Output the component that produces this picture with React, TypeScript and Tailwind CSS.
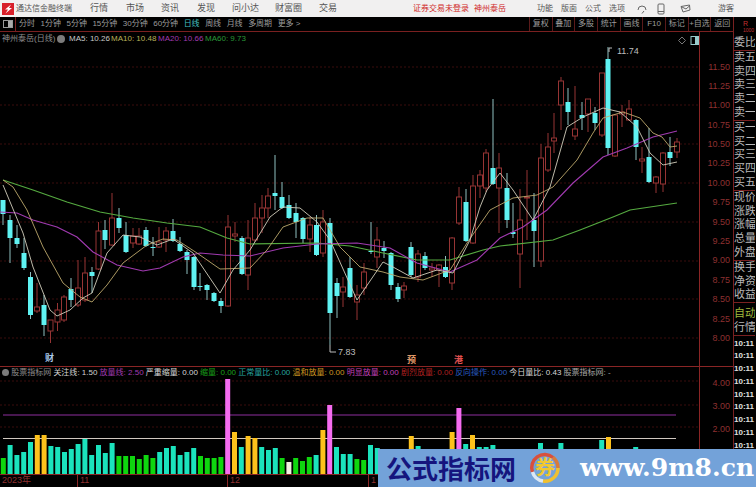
const candles: [number, number, number, number, number, string][] = [
  [3, 200, 200, 214, 225, "c"], [10, 215, 220, 238, 263, "c"], [17, 225, 238, 244, 248, "c"], [24, 238, 253, 268, 270, "c"],
  [30.5, 272, 277, 315, 319, "c"], [37, 283, 307, 311, 313, "r"], [44, 295, 305, 325, 336, "c"], [50.5, 320, 320, 331, 343, "r"],
  [57.5, 303, 310, 322, 331, "r"], [64, 295, 297, 320, 322, "r"], [71, 278, 289, 300, 307, "c"], [78, 260, 288, 305, 307, "r"],
  [85, 257, 273, 300, 302, "r"], [92, 267, 272, 276, 293, "c"], [98.5, 222, 231, 269, 270, "r"], [105, 220, 230, 240, 249, "c"],
  [112, 193, 218, 245, 246, "r"], [119, 208, 218, 228, 233, "c"], [126, 222, 235, 252, 253, "c"], [133, 228, 236, 243, 248, "r"],
  [139, 228, 236, 244, 245, "r"], [146, 227, 230, 246, 247, "c"], [153, 237, 247, 248, 256, "c"], [159, 227, 242, 247, 248, "r"],
  [166, 227, 231, 240, 252, "r"], [173, 219, 231, 241, 242, "c"], [180, 237, 244, 251, 252, "c"], [187, 250, 252, 260, 274, "c"],
  [194, 256, 257, 287, 290, "c"], [200, 273, 286, 287, 291, "c"], [207, 284, 285, 290, 300, "c"], [214, 292, 293, 301, 302, "c"],
  [221, 298, 301, 306, 313, "c"], [228, 215, 227, 306, 307, "r"], [235, 222, 234, 236, 242, "r"], [242, 236, 238, 274, 275, "c"],
  [248, 220, 238, 275, 290, "r"], [255, 203, 218, 240, 242, "r"], [262, 195, 208, 218, 233, "r"], [268, 188, 196, 208, 218, "r"],
  [275, 155, 193, 196, 210, "c"], [282, 182, 197, 208, 209, "c"], [289, 195, 205, 218, 219, "c"], [296, 203, 213, 222, 238, "c"],
  [303, 217, 218, 239, 243, "c"], [310, 217, 225, 239, 252, "r"], [316.5, 215, 225, 255, 256, "c"], [323, 210, 222, 253, 257, "r"],
  [330, 218, 223, 313, 345, "c"], [337, 278, 283, 296, 318, "c"], [343, 277, 287, 292, 307, "r"], [350, 257, 268, 297, 298, "c"],
  [357, 285, 295, 302, 320, "r"], [364, 263, 272, 288, 295, "r"], [371, 222, 251, 252, 254, "c"], [377, 227, 240, 257, 268, "r"],
  [384, 241, 248, 251, 258, "c"], [391, 252, 253, 285, 290, "c"], [398, 283, 287, 299, 302, "c"], [404, 282, 286, 290, 298, "r"],
  [411, 242, 247, 275, 277, "c"], [418, 250, 254, 277, 282, "r"], [425, 252, 256, 268, 270, "c"], [432, 263, 268, 270, 277, "r"],
  [439, 264, 265, 270, 287, "r"], [445.5, 256, 267, 277, 278, "c"], [452, 237, 238, 283, 290, "r"], [459, 187, 197, 223, 225, "r"],
  [466, 189, 202, 241, 242, "c"], [473, 175, 186, 243, 244, "r"], [480, 170, 175, 186, 198, "r"], [486, 149, 153, 188, 192, "r"],
  [493, 99, 168, 184, 185, "c"], [499, 153, 168, 188, 233, "r"], [507, 173, 188, 220, 228, "c"], [513, 203, 232, 234, 238, "c"],
  [520, 189, 220, 254, 288, "r"], [527, 170, 197, 198, 240, "r"], [534, 193, 220, 231, 267, "c"], [541, 144, 158, 261, 267, "r"],
  [548, 133, 147, 170, 172, "r"], [554, 113, 138, 141, 153, "r"], [561, 77, 81, 105, 130, "r"], [568, 88, 102, 112, 125, "c"],
  [575, 86, 129, 136, 140, "r"], [582, 102, 115, 118, 130, "c"], [588, 99, 99, 114, 132, "r"], [595, 107, 113, 123, 130, "c"],
  [602, 73, 73, 135, 137, "r"], [608, 47, 59, 148, 155, "c"], [615, 114, 115, 156, 157, "r"], [622, 105, 112, 114, 127, "r"],
  [629, 100, 109, 120, 121, "r"], [636, 119, 120, 147, 160, "c"], [642, 147, 159, 161, 173, "r"], [649, 128, 157, 182, 183, "c"],
  [656, 176, 177, 183, 193, "r"], [663, 152, 153, 184, 192, "r"], [670, 137, 152, 158, 166, "c"], [677, 138, 142, 152, 158, "r"],
]

const ma5 = "3,185 23,233 33,267 50,310 57,316 70,310 83,298 92,293 107,253 123,235 140,237 157,245 173,239 193,253 220,293 233,270 250,250 270,217 283,207 300,208 317,222 330,240 357,300 383,262 393,267 413,278 437,270 453,273 470,240 480,207 487,190 500,173 513,190 533,220 550,187 567,127 583,117 603,108 620,112 637,127 650,153 663,165 677,162"
const ma10 = "3,180 13,187 27,210 43,247 63,283 80,297 92,302 107,285 123,263 147,245 163,239 177,240 197,253 220,269 250,268 267,250 283,227 307,218 323,218 340,247 360,267 383,272 400,277 423,280 450,270 467,243 490,210 513,198 537,195 553,187 577,160 593,133 603,118 623,112 640,118 653,133 662,137 670,147 677,146"
const ma20 = "0,212 17,213 33,220 57,227 77,237 93,252 117,265 143,271 160,268 183,257 200,253 223,255 250,256 283,248 317,244 357,243 390,248 417,263 450,272 477,260 500,238 523,227 547,210 573,183 603,157 627,148 653,137 677,131"
const ma60 = "3,180 33,190 67,202 100,212 133,218 167,223 200,227 227,238 250,244 317,243 350,246 383,253 417,260 450,260 483,250 500,246 553,240 580,230 613,217 630,210 677,203"

const barColors: Record<string, string> = { g: "#0fd60f", t: "#1be3bd", y: "#fdc21c", m: "#f56cf0", w: "#f2f2e0" }
const bars: [string, number][] = [
  ["g", 16], ["t", 29], ["t", 19], ["t", 22], ["t", 32], ["y", 39], ["y", 39], ["t", 28], ["t", 27], ["t", 22], ["t", 25], ["t", 30], ["t", 35], ["t", 19],
  ["t", 29], ["t", 21], ["t", 31], ["g", 18], ["g", 18], ["g", 18], ["g", 15], ["g", 19], ["g", 16], ["t", 22], ["t", 26], ["t", 28], ["t", 19], ["t", 22],
  ["t", 26], ["g", 18], ["g", 16], ["g", 16], ["g", 17], ["m", 95], ["y", 42], ["t", 27], ["y", 38], ["y", 36], ["t", 27], ["t", 24], ["t", 26], ["g", 16],
  ["w", 12], ["g", 16], ["g", 13], ["g", 17], ["t", 19], ["y", 44], ["m", 69], ["t", 27], ["t", 20], ["t", 20], ["g", 15], ["g", 14], ["t", 29], ["t", 26],
]
const lateBars: [number, string, number][] = [
  [60, "y", 38], [61, "t", 28], [66, "y", 42], [67, "m", 66], [68, "t", 30], [69, "y", 39], [70, "t", 27], [71, "t", 27], [72, "t", 29],
  [79, "t", 31], [82, "t", 31], [88, "t", 34], [89, "y", 37], [93, "t", 27],
]

const menus = [["行情", "ml-[19px]"], ["市场", "ml-[18px]"], ["资讯", "ml-[17px]"], ["发现", "ml-[18px]"], ["问小达", "ml-[17px]"], ["财富圈", "ml-[16px]"], ["交易", "ml-[17px]"]]
const periods = ["分时", "1分钟", "5分钟", "15分钟", "30分钟", "60分钟", "日线", "周线", "月线", "多周期", "更多 >"]
const tools = ["复权", "叠加", "多股", "统计", "画线", "F10", "标记", "+自选", "返回"]
const prices = ["11.50", "11.25", "11.00", "10.75", "10.50", "10.25", "10.00", "9.75", "9.50", "9.25", "9.00", "8.75", "8.50", "8.25", "8.00"]
const quoteGroups = [["委比"], ["卖五", "卖四", "卖三", "卖二", "卖一"], ["买一", "买二", "买三", "买四", "买五"], ["现价", "涨跌", "涨幅", "总量", "外盘"], ["换手", "净资", "收益"]]
const indicators = [
  ["关注线", "1.50", "text-[#d0d0d0]"], ["放量线", "2.50", "text-[#a03ab0]"], ["严重缩量", "0.00", "text-[#d8d8d8]"], ["缩量", "0.00", "text-[#19a019]"],
  ["正常量比", "0.00", "text-[#25a5a0]"], ["温和放量", "0.00", "text-[#d09820]"], ["明显放量", "0.00", "text-[#c040b8]"], ["剧烈放量", "0.00", "text-[#b02020]"],
  ["反向操作", "0.00", "text-[#2a5cc0]"], ["今日量比", "0.43", "text-[#d8d8d8]"], ["股票指标网", "-", "text-[#a8a8a8]"],
]

const App = () => {
  return (
    <div className="relative w-[756px] h-[487px] overflow-hidden bg-black flex flex-col font-['Liberation_Sans','Noto_Sans_CJK_SC',sans-serif]">

      {/* title bar */}
      <div className="h-[17px] shrink-0 bg-[#f1f0f0] flex items-center text-[#555] whitespace-nowrap">
        <svg width="12" height="12" viewBox="0 0 12 12" className="ml-[2px]">
          <rect width="12" height="12" fill="#d8202a" />
          <path d="M9 1.500 3 6.500h3L3.500 10.500 10 5H7z" fill="#fff" />
        </svg>
        <span className="ml-[2px] text-[8px] w-[55px]">通达信金融终端</span>
        {menus.map(([m, c]) => (
          <span key={m} className={`${c} text-[9px]`}>{m}</span>
        ))}
        <span className="ml-[76px] text-[8px] text-[#d02a2a]">证券交易未登录</span>
        <span className="ml-[5px] text-[8px] text-[#d02a2a]">神州泰岳</span>
        <span className="ml-[31px] text-[8px]">功能</span>
        <span className="ml-[8px] text-[8px]">版面</span>
        <span className="ml-[8px] text-[8px]">公式</span>
        <span className="ml-[8px] text-[8px]">选项</span>
        <svg width="10" height="10" viewBox="0 0 10 10" fill="none" stroke="#666" className="ml-[12px]">
          <path d="M1 6a4 4 0 1 1 8 0M5 9.500 7 7" />
        </svg>
        <svg width="8" height="12" viewBox="0 0 8 12" fill="none" stroke="#666" className="ml-[10px]">
          <rect x="1" y="1" width="6" height="10" rx="1" />
          <path d="M1 8.500h6" />
        </svg>
        <svg width="11" height="9" viewBox="0 0 11 9" fill="none" stroke="#666" className="ml-[15px]">
          <path d="M1 2.500 9.500 1l.5 5-7 2-2-5.500 5 2.500 4-3.500" />
        </svg>
        <span className="ml-[27px] text-[8px]">游客</span>
      </div>

      <div className="flex flex-1 min-h-0">
        <div className="w-[734px] shrink-0 flex flex-col border-r border-[#7a2020]">

          {/* period + tool bar */}
          <div className="h-[15px] shrink-0 flex items-center border-b border-[#7a2020] text-[8px] text-[#9c9c9c] whitespace-nowrap">
            <div className="w-[16px] h-full flex items-center justify-center border-r border-[#7a2020]">
              <div className="w-[10px] h-[8px] border border-[#999] flex justify-end"><div className="w-[4px] bg-[#aaa]" /></div>
            </div>
            <div className="flex items-center gap-[5.500px] ml-[3px]">
              {periods.map((p) => (
                <span key={p} className={p === "日线" ? "text-[#45c0c0]" : ""}>{p}</span>
              ))}
            </div>
            <div className="ml-auto flex h-full">
              {tools.map((t) => (
                <span key={t} className="h-full flex items-center w-[22.700px] justify-center border-l border-[#5a1a1a]">{t}</span>
              ))}
            </div>
          </div>

          {/* main chart */}
          <div className="relative h-[335px] shrink-0 flex border-b border-[#8a2525]">
            <svg viewBox="0 32 700 335" width="700" height="335" className="absolute left-0 top-0">
              {[67, 105, 144, 183, 222, 261, 299, 338].map((y) => (
                <line key={y} x1="0" x2="700" y1={y} y2={y} stroke="#3a0c0c" strokeDasharray="2 2" />
              ))}
              {candles.map(([x, wt, bt, bb, wb, k]) => {
                const red = k === "r"
                return (
                  <g key={x}>
                    <line x1={x} x2={x} y1={wt} y2={bt} stroke={red ? "#963434" : "#8fc0c0"} />
                    <line x1={x} x2={x} y1={bb} y2={wb} stroke={red ? "#963434" : "#8fc0c0"} />
                    <rect x={x - 2.500} y={bt} width="5" height={Math.max(bb - bt, 1)} fill={red ? "#000" : "#5ff2f2"} stroke={red ? "#963434" : "#5ff2f2"} strokeWidth={red ? 1 : 0} />
                  </g>
                )
              })}
              <polyline points={ma60} fill="none" stroke="#55aa40" strokeWidth="1.200" />
              <polyline points={ma20} fill="none" stroke="#a03ab0" strokeWidth="1.100" />
              <polyline points={ma10} fill="none" stroke="#bca86c" strokeWidth="0.900" />
              <polyline points={ma5} fill="none" stroke="#d2cebc" strokeWidth="0.900" />
              <path d="M609 52V48H612M330 345V352H336" fill="none" stroke="#bbb" />
              <text x="617" y="54" fontSize="9" fill="#bdbdbd">11.74</text>
              <text x="338" y="355" fontSize="9" fill="#bdbdbd">7.83</text>
              <path d="M682 37l3.500 3.500-3.500 3.500-3.500-3.500z" fill="none" stroke="#777" />
              <rect x="691" y="36.500" width="8" height="8" fill="none" stroke="#9cc" />
              <rect x="695" y="36.500" width="4" height="8" fill="#9cc" />
            </svg>
            <div className="relative w-[700px] shrink-0 border-r border-[#8a2525]">
              <div className="h-[14px] flex items-center pl-[2px] text-[8px] whitespace-nowrap">
                <span className="text-[#8e8e8e] w-[54px]">神州泰岳(日线)</span>
                <span className="w-[8px] h-[8px] rounded-full bg-[#7c7c7c] mr-[4px] ml-[1px]" />
                <span className="text-[#c8c8c8] w-[42px]">MA5: 10.26</span>
                <span className="text-[#b8b058] w-[47px]">MA10: 10.48</span>
                <span className="text-[#a03ab0] w-[47px]">MA20: 10.66</span>
                <span className="text-[#2a9838]">MA60: 9.73</span>
              </div>
              <span className="absolute left-[45px] top-[321px] text-[9px] font-bold leading-[10px] text-[#a8c8e8]">财</span>
              <span className="absolute left-[407px] top-[323px] text-[9px] font-bold leading-[10px] text-[#e09868]">预</span>
              <span className="absolute left-[454px] top-[323px] text-[9px] font-bold leading-[10px] text-[#e05050]">港</span>
            </div>
            <div className="flex-1 pt-[25.500px] pr-[3px] flex flex-col items-end text-[9px] text-[#8e3030]">
              {prices.map((p) => (
                <span key={p} className="h-[19.400px] leading-[19.400px]">{p}</span>
              ))}
            </div>
          </div>

          {/* indicator panel */}
          <div className="relative h-[108px] shrink-0 flex border-b border-[#8a2525]">
            <svg viewBox="0 368 700 108" width="700" height="108" className="absolute left-0 top-0">
              {[382, 406, 428].map((y) => (
                <line key={y} x1="0" x2="700" y1={y} y2={y} stroke="#3a0c0c" strokeDasharray="2 2" />
              ))}
              <line x1="3" x2="676" y1="416" y2="416" stroke="#8e2f9e" />
              <line x1="3" x2="676" y1="439.500" y2="439.500" stroke="#d0c8c0" />
              {bars.map(([c, h], i) => (
                <rect key={i} x={0.800 + i * 6.800} y={475 - h} width="5" height={h} fill={barColors[c]} />
              ))}
              {lateBars.map(([i, c, h]) => (
                <rect key={i} x={0.800 + i * 6.800} y={475 - h} width="5" height={h} fill={barColors[c]} />
              ))}
            </svg>
            <div className="relative w-[700px] shrink-0 border-r border-[#8a2525]">
              <div className="h-[11px] flex items-center gap-[2.200px] text-[8px] whitespace-nowrap pl-[2px]">
                <span className="w-[7px] h-[7px] rounded-full bg-[#7c7c7c]" />
                <span className="text-[#8e8e8e]">股票指标网</span>
                {indicators.map(([label, value, c]) => (
                  <span key={label} className={c}>{label}: {value}</span>
                ))}
              </div>
            </div>
            <div className="flex-1 pt-[5px] pr-[3px] flex flex-col items-end text-[9px] text-[#8e3030]">
              {["4.00", "3.00", "2.00", "1.00"].map((p) => (
                <span key={p} className="h-[23px] leading-[23px]">{p}</span>
              ))}
            </div>
          </div>

          {/* date axis */}
          <div className="flex-1 flex text-[9px] leading-[11px] text-[#8e3030] whitespace-nowrap">
            <span className="w-[77px] pl-[2px]">2023年</span>
            <span className="w-[150px] pl-[2px] border-l border-[#8a2525]">11</span>
            <span className="w-[141px] pl-[2px] border-l border-[#8a2525]">12</span>
            <span className="pl-[2px] border-l border-[#8a2525]">1</span>
          </div>
        </div>

        {/* quote column */}
        <div className="w-[21px] overflow-hidden flex flex-col text-[#b8b8b8] text-[11px] leading-[13.800px] whitespace-nowrap">
          <div className="h-[19px] pl-[9px] shrink-0 flex flex-col text-[#c03030] text-[7px] leading-[7px] pt-[3px]">
            <span>R</span>
            <span className="text-[5px]">1000</span>
          </div>
          {quoteGroups.map((g) => (
            <div key={g[0]} className="border-b border-[#7a2020]">
              {g.map((q) => (
                <div key={q}>{q}</div>
              ))}
            </div>
          ))}
          <div className="border-b border-[#7a2020] pt-[4px]">
            <div className="text-[#a0b83c]">自动</div>
            <div>行情</div>
          </div>
          <div className="font-bold text-[8px] leading-[12.750px] text-[#e0e0e0] pt-[2px]">
            {Array.from({ length: 9 }, (_, i) => (
              <div key={i}>10:11</div>
            ))}
          </div>
        </div>
      </div>

      {/* watermark */}
      <div className="absolute left-[378px] right-0 bottom-0 h-[38px] bg-[#73a2d9] flex items-center whitespace-nowrap">
        <span className="ml-[8px] w-[135px] text-[26px] leading-[38px] font-bold text-[#15157e] font-['Noto_Sans_CJK_SC',sans-serif]">公式指标网</span>
        <svg width="32" height="32" viewBox="0 0 32 32" className="shrink-0 ml-[8px]">
          <path d="M3.500 20A13 13 0 0 1 24 5.500" fill="none" stroke="#d8503c" strokeWidth="3.500" />
          <path d="M24 5.500A13 13 0 0 1 29 16" fill="none" stroke="#d87a3c" strokeWidth="3.500" />
          <path d="M29 16A13 13 0 0 1 14 29" fill="none" stroke="#f0c030" strokeWidth="3.500" />
          <path d="M14 29A13 13 0 0 1 3.500 20" fill="none" stroke="#dce8f4" strokeWidth="3.500" />
          <text x="16" y="23" textAnchor="middle" fontSize="20" fontWeight="700" fill="#f0c830" fontFamily="Noto Sans CJK SC">券</text>
        </svg>
        <span className="ml-[19px] text-[25px] leading-[38px] font-bold text-white font-['DejaVu_Serif',serif]">www.9m8.cn</span>
      </div>
    </div>
  )
}

export default App
